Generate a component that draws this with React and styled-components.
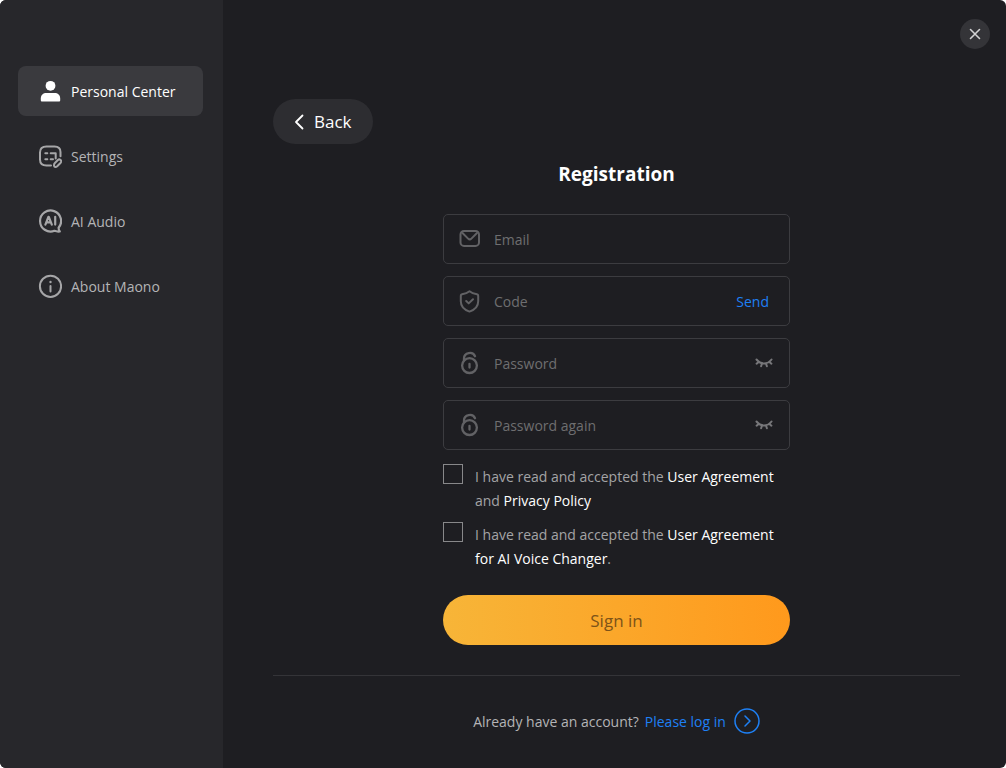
import React, { useState } from "react";
import styled, { createGlobalStyle } from "styled-components";

const GlobalStyle = createGlobalStyle`
  * {
    box-sizing: border-box;
  }
  body {
    margin: 0;
    background: #ffffff;
    font-family: "Open Sans", "Noto Sans", sans-serif;
    font-size: 14px;
  }
  button, input {
    font-family: inherit;
  }
  a {
    text-decoration: none;
  }
`;

const Window = styled.div`
  display: flex;
  min-height: 100vh;
  border-radius: 6px;
  overflow: hidden;
  background: #1e1e22;
`;

const Sidebar = styled.nav`
  display: flex;
  flex-direction: column;
  gap: 15px;
  flex: 0 0 223px;
  padding: 66px 20px 20px 18px;
  background: #27272b;
`;

const NavItem = styled.a`
  display: flex;
  align-items: center;
  gap: 9px;
  height: 50px;
  padding: 0 20px;
  border-radius: 8px;
  color: ${({ $active }) => ($active ? "#ffffff" : "#b4b4b6")};
  background: ${({ $active }) => ($active ? "#3a3a3e" : "transparent")};

  svg {
    color: ${({ $active }) => ($active ? "#ffffff" : "#a6a6a8")};
  }
`;

const Main = styled.main`
  flex: 1;
  display: flex;
  flex-direction: column;
  min-width: 0;
`;

const TitleBar = styled.header`
  display: flex;
  justify-content: flex-end;
  padding: 19px 16px 0;
`;

const CloseButton = styled.button`
  display: flex;
  align-items: center;
  justify-content: center;
  width: 30px;
  height: 30px;
  padding: 0;
  border: none;
  border-radius: 50%;
  color: #d2d2d3;
  background: #343438;
  cursor: pointer;
`;

const Content = styled.div`
  display: flex;
  flex-direction: column;
  padding: 50px 46px 0 50px;
`;

const BackButton = styled.button`
  display: flex;
  align-items: center;
  align-self: flex-start;
  gap: 10px;
  height: 45px;
  padding: 0 21px;
  border: none;
  border-radius: 23px;
  font-size: 17px;
  color: #ffffff;
  background: #2d2d31;
  cursor: pointer;
`;

const Form = styled.form`
  display: flex;
  flex-direction: column;
  gap: 12px;
  width: 100%;
  max-width: 347px;
  margin: 16px auto 0;
`;

const Title = styled.h1`
  margin: 0 0 14px;
  font-size: 19px;
  line-height: 28px;
  text-align: center;
  color: #ffffff;
`;

const Field = styled.label`
  display: flex;
  align-items: center;
  gap: 12px;
  height: 50px;
  padding: 0 16px 0 14px;
  border: 1px solid #3c3c40;
  border-radius: 5px;
  color: #626265;
`;

const Input = styled.input`
  flex: 1;
  min-width: 0;
  padding: 0;
  border: none;
  outline: none;
  font-size: 14px;
  color: #ffffff;
  background: transparent;

  &::placeholder {
    color: #6e6e70;
    opacity: 1;
  }
`;

const SendButton = styled.button`
  padding: 0 4px;
  border: none;
  font-size: 14px;
  color: #1e80f5;
  background: none;
  cursor: pointer;
`;

const EyeButton = styled.button`
  display: flex;
  padding: 0;
  border: none;
  color: #77777a;
  background: none;
  cursor: pointer;
`;

const Agreements = styled.div`
  display: flex;
  flex-direction: column;
  gap: 9px;
  margin-top: 2px;
`;

const Agreement = styled.div`
  display: flex;
  align-items: flex-start;
  gap: 12px;
`;

const Checkbox = styled.input`
  appearance: none;
  flex: none;
  width: 20px;
  height: 20px;
  margin: 0;
  border: 1px solid #88888a;

  &:checked {
    background: #fba62a;
  }
`;

const AgreementLabel = styled.label`
  padding-top: 1px;
  line-height: 24px;
  color: #a4a4a6;

  a {
    color: #ffffff;
  }
`;

const SubmitButton = styled.button`
  height: 50px;
  margin-top: 12px;
  border: none;
  border-radius: 25px;
  font-size: 17px;
  color: #7d5318;
  background: linear-gradient(90deg, #f7b538, #ff991c);
  cursor: pointer;
`;

const Footer = styled.footer`
  display: flex;
  align-items: center;
  justify-content: center;
  gap: 6px;
  margin-top: 30px;
  padding: 32px 0 20px;
  border-top: 1px solid #343438;
  color: #b4b4b6;
`;

const LoginLink = styled.a`
  display: flex;
  align-items: center;
  gap: 8px;
  color: #1e80f5;
`;

const Icon = ({ size = 24, width = size, height = size, stroke = 2, children }) => (
  <svg
    width={width}
    height={height}
    viewBox={`0 0 ${width} ${height}`}
    fill="none"
    stroke="currentColor"
    strokeWidth={stroke}
    strokeLinecap="round"
    strokeLinejoin="round"
    aria-hidden="true"
  >
    {children}
  </svg>
);

const UserIcon = () => (
  <Icon>
    <g fill="currentColor" stroke="none">
      <circle cx="12.5" cy="6.8" r="4.9" />
      <path d="M2.8 19.5c0-3.6 2.4-5.5 5.6-5.5h8.2c3.2 0 5.6 1.9 5.6 5.5v1.7c0 .8-.5 1.3-1.3 1.3H4.1c-.8 0-1.3-.5-1.3-1.3z" />
    </g>
  </Icon>
);

const SettingsIcon = () => (
  <Icon>
    <path d="M13 21.5H8.5C4 21.5 2 19.5 2 15.5V8.5C2 4.5 4 2.5 8.5 2.5h8c4 0 6 2 6 5.5v4.2" />
    <path d="M7.3 9.2h2M12.7 9.2h5v5.2M7.3 15.2h2M12.7 15.2h2.3" />
    <path d="M16.9 19l3-3c1.700-1.700 4.600.6 2.800 2.700l-3.500 3.500c-1.300 1.200-3 .9-3.200-.6-.1-1 .2-1.900.9-2.600z" />
  </Icon>
);

const AiIcon = () => (
  <Icon stroke={2.2}>
    <path d="M20.6 18.8A10.5 10.5 0 1 0 16.4 21.8c1.7.6 3.7.9 5.4.6-.9-1-1.2-2.200-1.2-3.600z" />
    <path d="M7.4 15.6l3-7.800h.4l3 7.800M8.6 13.3h4.200M17.2 7.8v7.800" />
  </Icon>
);

const InfoIcon = () => (
  <Icon>
    <circle cx="12.5" cy="12.3" r="10.6" />
    <path d="M12.5 12v5.5" />
    <circle cx="12.5" cy="8" r="1.2" fill="currentColor" stroke="none" />
  </Icon>
);

const MailIcon = () => (
  <Icon>
    <rect x="2.5" y="3.9" width="18.5" height="15" rx="3.5" />
    <path d="M4.5 6l5.6 5.6c1 1 2.3 1 3.3 0L19 6" />
  </Icon>
);

const ShieldIcon = () => (
  <Icon>
    <path d="M11.5 2.2c2.2 1.7 4.9 2.5 7.4 3 .9.2 1.3.6 1.3 1.5v5.6c0 5-3.2 8.500-8.700 10.300-5.500-1.800-8.700-5.300-8.700-10.300V6.700c0-.9.4-1.300 1.300-1.500 2.500-.5 5.200-1.300 7.400-3z" />
    <path d="M8.200 12l2.500 2.400 4.300-4.200" />
  </Icon>
);

const LockIcon = () => (
  <Icon stroke={2.3}>
    <circle cx="11.5" cy="14.600" r="7.4" />
    <path d="M6 9.500V7.500c0-6 8.800-7.600 11-2.300" />
    <path d="M11.5 13v3.500" />
  </Icon>
);

const ClosedEyeIcon = () => (
  <Icon width={18} height={12}>
    <path d="M1.5 2.5c4.200 5.200 11 5.200 15 0M3.800 4.700L1.600 6.700M7 6.500L6.100 9.200M11 6.500l.9 2.700M14.200 4.700l2.200 2" />
  </Icon>
);

const navItems = [
  { label: "Personal Center", icon: <UserIcon /> },
  { label: "Settings", icon: <SettingsIcon /> },
  { label: "AI Audio", icon: <AiIcon /> },
  { label: "About Maono", icon: <InfoIcon /> },
];

const PasswordField = ({ label }) => {
  const [visible, setVisible] = useState(false);

  return (
    <Field>
      <LockIcon />
      <Input type={visible ? "text" : "password"} placeholder={label} aria-label={label} />
      <EyeButton type="button" aria-label="Show password" onClick={() => setVisible(!visible)}>
        <ClosedEyeIcon />
      </EyeButton>
    </Field>
  );
};

const App = () => {
  const [active, setActive] = useState("Personal Center");

  return (
    <>
      <GlobalStyle />
      <Window>
        <Sidebar>
          {navItems.map((item) => (
            <NavItem
              key={item.label}
              href="#"
              $active={item.label === active}
              onClick={() => setActive(item.label)}
            >
              {item.icon}
              {item.label}
            </NavItem>
          ))}
        </Sidebar>
        <Main>
          <TitleBar>
            <CloseButton aria-label="Close">
              <Icon size={12} stroke={1.6}>
                <path d="M1.5 1.5l9 9M10.5 1.5l-9 9" />
              </Icon>
            </CloseButton>
          </TitleBar>
          <Content>
            <BackButton>
              <Icon width={10} height={16} stroke={1.8}>
                <path d="M8.5 1.5L2 8l6.5 6.5" />
              </Icon>
              Back
            </BackButton>
            <Form onSubmit={(e) => e.preventDefault()}>
              <Title>Registration</Title>
              <Field>
                <MailIcon />
                <Input type="email" placeholder="Email" aria-label="Email" />
              </Field>
              <Field>
                <ShieldIcon />
                <Input type="text" placeholder="Code" aria-label="Code" />
                <SendButton type="button">Send</SendButton>
              </Field>
              <PasswordField label="Password" />
              <PasswordField label="Password again" />
              <Agreements>
                <Agreement>
                  <Checkbox type="checkbox" id="terms" />
                  <AgreementLabel htmlFor="terms">
                    I have read and accepted the <a href="#">User Agreement</a> and{" "}
                    <a href="#">Privacy Policy</a>
                  </AgreementLabel>
                </Agreement>
                <Agreement>
                  <Checkbox type="checkbox" id="voice-terms" />
                  <AgreementLabel htmlFor="voice-terms">
                    I have read and accepted the <a href="#">User Agreement</a>{" "}
                    <a href="#">for AI Voice Changer</a>.
                  </AgreementLabel>
                </Agreement>
              </Agreements>
              <SubmitButton type="submit">Sign in</SubmitButton>
            </Form>
            <Footer>
              Already have an account?
              <LoginLink href="#">
                Please log in
                <Icon size={26} stroke={1.5}>
                  <circle cx="13" cy="13" r="12" />
                  <path d="M11 8l5 5-5 5" />
                </Icon>
              </LoginLink>
            </Footer>
          </Content>
        </Main>
      </Window>
    </>
  );
};

export default App;
